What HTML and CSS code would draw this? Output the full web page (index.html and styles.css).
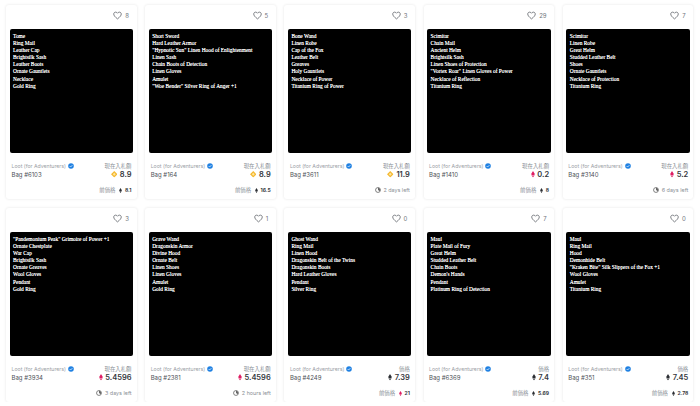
FILE: index.html
```html
<!DOCTYPE html>
<html lang="en">
<head>
    <meta charset="UTF-8">
    <meta name="viewport" content="width=device-width, initial-scale=1.0">
    <title>Loot (for Adventurers)</title>
    <link rel="stylesheet" href="styles.css">
</head>
<body>
    <svg class="defs" width="0" height="0">
        <symbol id="heart" viewBox="0 0 24 24"><path d="M12 21 C5 15.5 2 12 2 8 C2 5 4.3 3 7 3 C9 3 11 4 12 6 C13 4 15 3 17 3 C19.7 3 22 5 22 8 C22 12 19 15.500 12 21 Z" fill="none" stroke="#565a60" stroke-width="2"/></symbol>
        <symbol id="check" viewBox="0 0 12 12"><circle cx="6" cy="6" r="5.600" fill="#2081e2"/><path d="M3.400 6.200 L5.200 8 L8.700 4.400" fill="none" stroke="#fff" stroke-width="1.400"/></symbol>
        <symbol id="eth" viewBox="0 0 10 16"><path d="M5 0 L10 8 L5 11 L0 8 Z M5 12.200 L9.500 9.500 L5 16 L0.500 9.500 Z" fill="currentColor"/></symbol>
        <symbol id="ape" viewBox="0 0 12 12"><path d="M6 0 L12 6 L6 12 L0 6 Z" fill="#f5b931"/><path d="M6 3.300 L8.700 6 L6 8.700 L3.300 6 Z" fill="#fde6a0"/></symbol>
        <symbol id="clock" viewBox="0 0 12 12"><circle cx="6" cy="6" r="4.900" fill="none" stroke="#444" stroke-width="1.300"/><path d="M6 1.500 V6 L9.500 8.500 A4.600 4.600 0 0 0 6 1.500 Z" fill="#666"/></symbol>
    </svg>

    <div class="grid">
        <div class="card">
            <div class="likes"><svg class="heart"><use href="#heart"/></svg><span>8</span></div>
            <div class="art">Tome<br>Ring Mail<br>Leather Cap<br>Brightsilk Sash<br>Leather Boots<br>Ornate Gauntlets<br>Necklace<br>Gold Ring</div>
            <div class="info">
                <div>
                    <div class="collection">Loot (for Adventurers) <svg class="check"><use href="#check"/></svg></div>
                    <div class="bag">Bag #6103</div>
                </div>
                <div class="price-box">
                    <div class="label">現在入札額</div>
                    <div class="price"><svg class="coin-ape"><use href="#ape"/></svg>8.9</div>
                </div>
            </div>
            <div class="foot"><span class="label">前価格</span><svg class="coin-small"><use href="#eth"/></svg><b>8.1</b></div>
        </div>

        <div class="card">
            <div class="likes"><svg class="heart"><use href="#heart"/></svg><span>5</span></div>
            <div class="art">Short Sword<br>Hard Leather Armor<br>"Hypnotic Sun" Linen Hood of Enlightenment<br>Linen Sash<br>Chain Boots of Detection<br>Linen Gloves<br>Amulet<br>"Woe Bender" Silver Ring of Anger +1</div>
            <div class="info">
                <div>
                    <div class="collection">Loot (for Adventurers) <svg class="check"><use href="#check"/></svg></div>
                    <div class="bag">Bag #164</div>
                </div>
                <div class="price-box">
                    <div class="label">現在入札額</div>
                    <div class="price"><svg class="coin-ape"><use href="#ape"/></svg>8.9</div>
                </div>
            </div>
            <div class="foot"><span class="label">前価格</span><svg class="coin-small"><use href="#eth"/></svg><b>16.5</b></div>
        </div>

        <div class="card">
            <div class="likes"><svg class="heart"><use href="#heart"/></svg><span>3</span></div>
            <div class="art">Bone Wand<br>Linen Robe<br>Cap of the Fox<br>Leather Belt<br>Greaves<br>Holy Gauntlets<br>Necklace of Power<br>Titanium Ring of Power</div>
            <div class="info">
                <div>
                    <div class="collection">Loot (for Adventurers) <svg class="check"><use href="#check"/></svg></div>
                    <div class="bag">Bag #3611</div>
                </div>
                <div class="price-box">
                    <div class="label">現在入札額</div>
                    <div class="price"><svg class="coin-ape"><use href="#ape"/></svg>11.9</div>
                </div>
            </div>
            <div class="foot"><svg class="clock"><use href="#clock"/></svg><span class="label">2 days left</span></div>
        </div>

        <div class="card">
            <div class="likes"><svg class="heart"><use href="#heart"/></svg><span>29</span></div>
            <div class="art">Scimitar<br>Chain Mail<br>Ancient Helm<br>Brightsilk Sash<br>Linen Shoes of Protection<br>"Vortex Roar" Linen Gloves of Power<br>Necklace of Reflection<br>Titanium Ring</div>
            <div class="info">
                <div>
                    <div class="collection">Loot (for Adventurers) <svg class="check"><use href="#check"/></svg></div>
                    <div class="bag">Bag #1410</div>
                </div>
                <div class="price-box">
                    <div class="label">現在入札額</div>
                    <div class="price"><svg class="coin-weth"><use href="#eth"/></svg>0.2</div>
                </div>
            </div>
            <div class="foot"><span class="label">前価格</span><svg class="coin-small"><use href="#eth"/></svg><b>8</b></div>
        </div>

        <div class="card">
            <div class="likes"><svg class="heart"><use href="#heart"/></svg><span>7</span></div>
            <div class="art">Scimitar<br>Linen Robe<br>Great Helm<br>Studded Leather Belt<br>Shoes<br>Ornate Gauntlets<br>Necklace of Protection<br>Titanium Ring</div>
            <div class="info">
                <div>
                    <div class="collection">Loot (for Adventurers) <svg class="check"><use href="#check"/></svg></div>
                    <div class="bag">Bag #3140</div>
                </div>
                <div class="price-box">
                    <div class="label">現在入札額</div>
                    <div class="price"><svg class="coin-weth"><use href="#eth"/></svg>5.2</div>
                </div>
            </div>
            <div class="foot"><svg class="clock"><use href="#clock"/></svg><span class="label">6 days left</span></div>
        </div>

        <div class="card">
            <div class="likes"><svg class="heart"><use href="#heart"/></svg><span>3</span></div>
            <div class="art">"Pandemonium Peak" Grimoire of Power +1<br>Ornate Chestplate<br>War Cap<br>Brightsilk Sash<br>Ornate Greaves<br>Wool Gloves<br>Pendant<br>Gold Ring</div>
            <div class="info">
                <div>
                    <div class="collection">Loot (for Adventurers) <svg class="check"><use href="#check"/></svg></div>
                    <div class="bag">Bag #3934</div>
                </div>
                <div class="price-box">
                    <div class="label">現在入札額</div>
                    <div class="price"><svg class="coin-weth"><use href="#eth"/></svg>5.4596</div>
                </div>
            </div>
            <div class="foot"><svg class="clock"><use href="#clock"/></svg><span class="label">3 days left</span></div>
        </div>

        <div class="card">
            <div class="likes"><svg class="heart"><use href="#heart"/></svg><span>1</span></div>
            <div class="art">Grave Wand<br>Dragonskin Armor<br>Divine Hood<br>Ornate Belt<br>Linen Shoes<br>Linen Gloves<br>Amulet<br>Gold Ring</div>
            <div class="info">
                <div>
                    <div class="collection">Loot (for Adventurers) <svg class="check"><use href="#check"/></svg></div>
                    <div class="bag">Bag #2381</div>
                </div>
                <div class="price-box">
                    <div class="label">現在入札額</div>
                    <div class="price"><svg class="coin-weth"><use href="#eth"/></svg>5.4596</div>
                </div>
            </div>
            <div class="foot"><svg class="clock"><use href="#clock"/></svg><span class="label">2 hours left</span></div>
        </div>

        <div class="card">
            <div class="likes"><svg class="heart"><use href="#heart"/></svg><span>0</span></div>
            <div class="art">Ghost Wand<br>Ring Mail<br>Linen Hood<br>Dragonskin Belt of the Twins<br>Dragonskin Boots<br>Hard Leather Gloves<br>Pendant<br>Silver Ring</div>
            <div class="info">
                <div>
                    <div class="collection">Loot (for Adventurers) <svg class="check"><use href="#check"/></svg></div>
                    <div class="bag">Bag #4249</div>
                </div>
                <div class="price-box">
                    <div class="label">価格</div>
                    <div class="price"><svg class="coin-eth"><use href="#eth"/></svg>7.39</div>
                </div>
            </div>
            <div class="foot"><span class="label">前価格</span><svg class="coin-small pink"><use href="#eth"/></svg><b>21</b></div>
        </div>

        <div class="card">
            <div class="likes"><svg class="heart"><use href="#heart"/></svg><span>7</span></div>
            <div class="art">Maul<br>Plate Mail of Fury<br>Great Helm<br>Studded Leather Belt<br>Chain Boots<br>Demon's Hands<br>Pendant<br>Platinum Ring of Detection</div>
            <div class="info">
                <div>
                    <div class="collection">Loot (for Adventurers) <svg class="check"><use href="#check"/></svg></div>
                    <div class="bag">Bag #6369</div>
                </div>
                <div class="price-box">
                    <div class="label">価格</div>
                    <div class="price"><svg class="coin-eth"><use href="#eth"/></svg>7.4</div>
                </div>
            </div>
            <div class="foot"><span class="label">前価格</span><svg class="coin-small"><use href="#eth"/></svg><b>5.69</b></div>
        </div>

        <div class="card">
            <div class="likes"><svg class="heart"><use href="#heart"/></svg><span>0</span></div>
            <div class="art">Maul<br>Ring Mail<br>Hood<br>Demonhide Belt<br>"Kraken Bite" Silk Slippers of the Fox +1<br>Wool Gloves<br>Amulet<br>Titanium Ring</div>
            <div class="info">
                <div>
                    <div class="collection">Loot (for Adventurers) <svg class="check"><use href="#check"/></svg></div>
                    <div class="bag">Bag #351</div>
                </div>
                <div class="price-box">
                    <div class="label">価格</div>
                    <div class="price"><svg class="coin-eth"><use href="#eth"/></svg>7.45</div>
                </div>
            </div>
            <div class="foot"><span class="label">前価格</span><svg class="coin-small"><use href="#eth"/></svg><b>2.78</b></div>
        </div>
    </div>
</body>
</html>
```

FILE: styles.css
```css
body {
    margin: 0;
    background-color: white;
    font-family: Inter, "Noto Sans CJK JP", sans-serif;
    color: #35383d;
    overflow: hidden;
}

.defs {
    position: absolute;
}

.grid {
    display: grid;
    grid-template-columns: repeat(5, 130.5px);
    grid-auto-rows: 194px;
    column-gap: 8.7px;
    row-gap: 9px;
    padding: 5px 0 0 6px;
}

.card {
    display: flex;
    flex-direction: column;
    padding: 0 3.5px;
    border-radius: 3px;
    box-shadow: 0 0 3px rgba(0, 0, 0, 0.11);
}

.likes {
    display: flex;
    justify-content: flex-end;
    align-items: center;
    gap: 3px;
    height: 24px;
    padding: 0 4px 4px 0;
    box-sizing: border-box;
    font-size: 6px;
    color: #70757c;
}

.heart {
    width: 9px;
    height: 9px;
}

.art {
    height: 123.5px;
    padding: 4px 3.500px;
    box-sizing: border-box;
    background-color: black;
    border-radius: 2px;
    color: white;
    font-family: "Liberation Serif", serif;
    font-size: 5.400px;
    line-height: 7.100px;
    text-shadow: 0 0 0.5px white;
    white-space: nowrap;
}

.info {
    display: flex;
    justify-content: space-between;
    padding: 9px 1.500px 0 2px;
}

.collection {
    display: flex;
    align-items: center;
    gap: 2px;
    height: 8px;
    font-size: 5.200px;
    color: #9a9ea5;
}

.check {
    width: 6px;
    height: 6px;
}

.bag {
    margin-top: 1.500px;
    font-size: 6px;
    color: #4d5157;
}

.price-box {
    text-align: right;
}

.label {
    font-size: 5.400px;
    color: #8a8f96;
}

.price-box .label {
    line-height: 8px;
}

.price {
    display: flex;
    justify-content: flex-end;
    align-items: center;
    gap: 2.500px;
    height: 10px;
    font-size: 7.500px;
    font-weight: 600;
}

.coin-ape {
    width: 6.500px;
    height: 6.500px;
}

.coin-weth {
    width: 4px;
    height: 6.500px;
    color: #df1d63;
}

.coin-eth {
    width: 4px;
    height: 6.500px;
    color: #2b2e33;
}

.foot {
    display: flex;
    justify-content: flex-end;
    align-items: center;
    gap: 2.500px;
    margin-top: auto;
    height: 16px;
    padding: 0 1.500px 2px 0;
    box-sizing: border-box;
}

.foot b {
    font-size: 5px;
    font-weight: 700;
}

.coin-small {
    width: 3px;
    height: 5px;
    margin-left: 1.500px;
    color: #2b2e33;
}

.pink {
    color: #df1d63;
}

.clock {
    width: 6px;
    height: 6px;
}
```
